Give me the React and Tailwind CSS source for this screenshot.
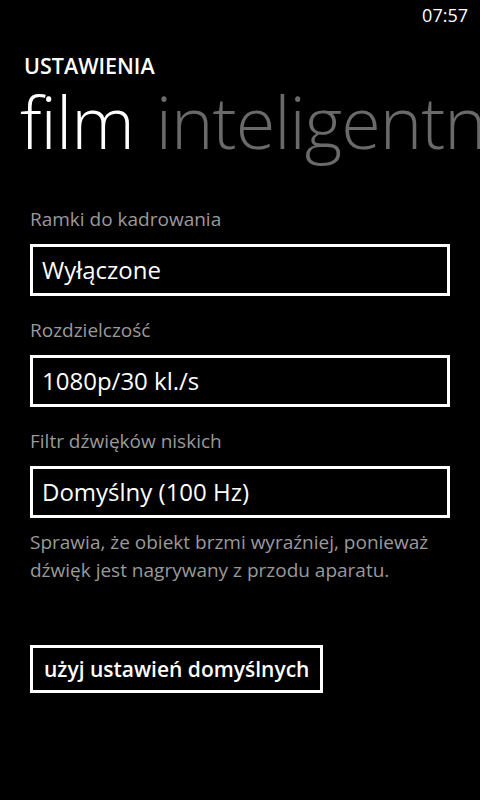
export default function App() {
  const font = { fontFamily: '"Open Sans", "Noto Sans", sans-serif' };
  return (
    <div className="w-[480px] h-[800px] bg-black text-white overflow-hidden" style={font}>
      <div className="flex justify-end pr-[12px] pt-[4px] h-[32px] text-[18px] leading-[22px]">07:57</div>
      <div className="pl-[24px] pt-[24px] text-[21.5px] font-semibold leading-[20px]">USTAWIENIA</div>
      <div className="flex whitespace-nowrap pl-[20px] mt-[-3px] text-[72px] font-light leading-[96px] tracking-[-1px]">
        <span>film</span>
        <span className="ml-[22px] text-[#6a6a6a]">inteligentny</span>
      </div>
      <div className="px-[30px] mt-[37px]">
        <Field label="Ramki do kadrowania" value="Wyłączone" />
        <Field label="Rozdzielczość" value="1080p/30 kl./s" />
        <Field label="Filtr dźwięków niskich" value="Domyślny (100 Hz)" last />
        <p className="mt-[10px] text-[19px] leading-[28px] text-[#9a9a9a]">
          Sprawia, że obiekt brzmi wyraźniej, ponieważ dźwięk jest nagrywany z przodu aparatu.
        </p>
        <button className="mt-[61px] h-[48px] px-[11px] border-[3px] border-white text-[21px] font-semibold leading-[26px]">
          użyj ustawień domyślnych
        </button>
      </div>
    </div>
  );
}

function Field({ label, value, last }) {
  return (
    <div className={last ? "" : "mb-[21px]"}>
      <div className="text-[19px] leading-[26px] text-[#9a9a9a]">{label}</div>
      <div className="mt-[12px] h-[52px] border-[3px] border-white flex items-center px-[9px] text-[24px]">{value}</div>
    </div>
  );
}
